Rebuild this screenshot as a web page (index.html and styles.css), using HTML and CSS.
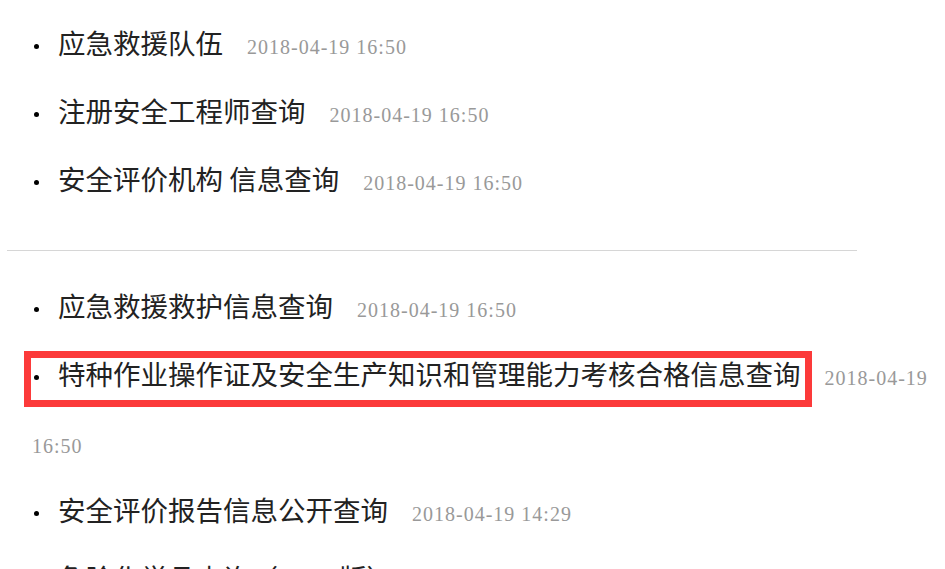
FILE: index.html
```html
<!DOCTYPE html>
<html lang="zh-CN">
<head>
    <meta charset="UTF-8">
    <meta name="viewport" content="width=device-width, initial-scale=1.0">
    <title>信息查询</title>
    <link rel="stylesheet" href="styles.css">
</head>
<body>
    <div class="query-list">
        <ul class="links">
            <li><span class="title">应急救援队伍</span><span class="time">2018-04-19 16:50</span></li>
            <li><span class="title">注册安全工程师查询</span><span class="time">2018-04-19 16:50</span></li>
            <li><span class="title">安全评价机构&nbsp;信息查询</span><span class="time">2018-04-19 16:50</span></li>
        </ul>
        <hr class="divider">
        <ul class="links">
            <li><span class="title">应急救援救护信息查询</span><span class="time">2018-04-19 16:50</span></li>
            <li class="marked"><span class="title">特种作业操作证及安全生产知识和管理能力考核合格信息查询</span><span class="time">2018-04-19 16:50</span></li>
            <li><span class="title">安全评价报告信息公开查询</span><span class="time">2018-04-19 14:29</span></li>
            <li><span class="title">危险化学品查询（2015版）</span><span class="time">2018-04-19 14:29</span></li>
        </ul>
    </div>
</body>
</html>
```

FILE: styles.css
```css
body {
    margin: 0;
    background-color: #ffffff;
    color: #222222;
    font-family: 'Noto Sans CJK SC', sans-serif;
    overflow: hidden;
}
.query-list {
    padding: 8px 8px 0 0;
}
.links {
    list-style: none;
    margin: 0;
    padding-left: 32px;
}
.links li {
    position: relative;
    line-height: 68px;
    font-size: 27.5px;
}
.links li::before {
    content: '';
    display: inline-block;
    width: 5px;
    height: 5px;
    margin: 0 19px 0 2px;
    border-radius: 50%;
    background-color: #000000;
    vertical-align: middle;
}
.title {
    color: #222222;
}
.time {
    margin-left: 24px;
    font-family: 'Liberation Serif', serif;
    font-size: 20px;
    line-height: 20px;
    letter-spacing: 1px;
    color: #999999;
}
.divider {
    width: 850px;
    margin: 38px 0 20px 7px;
    border: none;
    border-top: 1px solid #d6d6d6;
}
/* highlight frame around the marked entry */
.links li.marked::after {
    content: '';
    position: absolute;
    left: -8px;
    top: 12px;
    width: 788px;
    height: 56px;
    box-sizing: border-box;
    border: 7px solid #fc3a3a;
}
```
